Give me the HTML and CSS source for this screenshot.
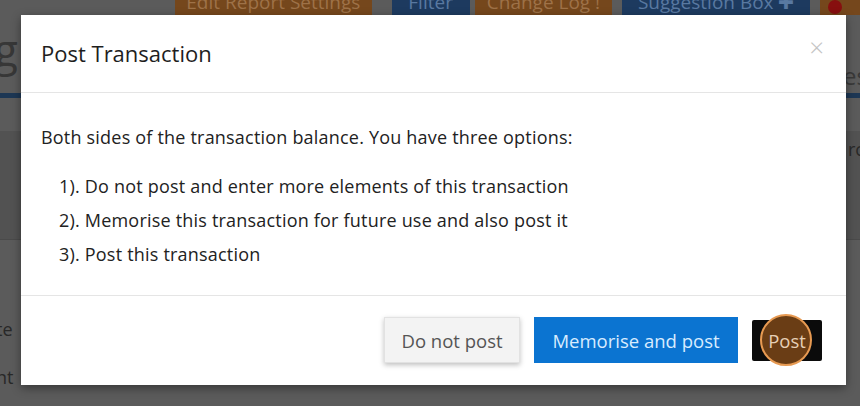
FILE: index.html
```html
<!DOCTYPE html>
<html lang="en">
<head>
  <meta charset="UTF-8">
  <title>Post Transaction</title>
  <link rel="stylesheet" href="styles.css">
</head>
<body>
  <div class="page">
    <div class="toolbar">
      <span class="tool-btn tool-orange tool-report">Edit Report Settings</span>
      <span class="tool-btn tool-blue tool-filter">Filter</span>
      <span class="tool-btn tool-orange tool-log">Change Log !</span>
      <span class="tool-btn tool-blue tool-suggest">Suggestion Box &#10010;</span>
      <span class="tool-btn tool-orange tool-dot"><i class="red-dot"></i></span>
    </div>
    <div class="page-head">
      <span class="page-title">g</span>
      <span class="page-sub">es</span>
    </div>
    <div class="page-rule"></div>
    <div class="page-band"><span class="band-text">rc</span></div>
    <div class="page-rows">
      <div class="row-label">te</div>
      <div class="row-label">nt</div>
    </div>
  </div>

  <div class="overlay"></div>

  <div class="modal">
    <div class="modal-header">
      <h4 class="modal-title">Post Transaction</h4>
      <span class="modal-close">&times;</span>
    </div>
    <div class="modal-body">
      <p class="modal-lead">Both sides of the transaction balance. You have three options:</p>
      <ul class="option-list">
        <li>1). Do not post and enter more elements of this transaction</li>
        <li>2). Memorise this transaction for future use and also post it</li>
        <li>3). Post this transaction</li>
      </ul>
    </div>
    <div class="modal-footer">
      <button class="btn btn-default">Do not post</button>
      <button class="btn btn-primary">Memorise and post</button>
      <button class="btn btn-dark"><span class="click-mark"></span><span class="btn-label">Post</span></button>
    </div>
  </div>
</body>
</html>
```

FILE: styles.css
```css
:root {
  --page-bg: #5f5f5f;
  --dim-orange: #7a4a1e;
  --dim-blue: #1f3d63;
  --modal-text: #222;
  --brand-blue: #0b74d1;
}

body {
  margin: 0;
  width: 860px;
  height: 406px;
  overflow: hidden;
  position: relative;
  background: var(--page-bg);
  font-family: "Open Sans", "Noto Sans", sans-serif;
}

/* dimmed page behind the dialog */
.page {
  height: 100%;
  display: flex;
  flex-direction: column;
}

.toolbar {
  display: flex;
  height: 15px;
  padding-left: 175px;
  gap: 10px;
  overflow: hidden;
}

.tool-btn {
  display: flex;
  align-items: flex-end;
  justify-content: center;
  height: 30px;
  margin-top: -15px;
  color: #a5774b;
  font-size: 19px;
  line-height: 1;
  padding-bottom: 3px;
  box-sizing: border-box;
  white-space: nowrap;
}

.tool-orange { background: var(--dim-orange); }
.tool-blue { background: var(--dim-blue); color: #5d7ea8; }

.tool-report { width: 197px; }
.tool-filter { width: 78px; margin-left: 10px; }
.tool-log { width: 138px; margin-left: -5px; }
.tool-suggest { width: 188px; }
.tool-dot { width: 40px; justify-content: flex-start; padding-left: 8px; }

.red-dot {
  width: 14px;
  height: 14px;
  border-radius: 50%;
  background: #8d1010;
  margin-bottom: -2px;
}

.page-head {
  height: 78px;
  display: flex;
  justify-content: space-between;
  align-items: flex-start;
  color: #3a3a3a;
}

.page-title {
  font-size: 44px;
  line-height: 1;
  margin-top: 12px;
  margin-left: -6px;
}

.page-sub {
  font-size: 24px;
  margin-top: 44px;
  margin-right: -8px;
  color: #3c3c3c;
}

.page-rule {
  height: 5px;
  background: #1f3a58;
}

.page-band {
  margin-top: 33px;
  height: 108px;
  background: #565656;
  border-bottom: 1px solid #4e4e4e;
  display: flex;
  justify-content: flex-end;
}

.band-text {
  font-size: 18px;
  color: #2a2a2a;
  margin-top: 6px;
  margin-right: -4px;
}

.page-rows {
  flex: 1;
  display: flex;
  flex-direction: column;
  padding-top: 80px;
  gap: 30px;
}

.row-label {
  font-size: 18px;
  color: #2a2a2a;
  margin-left: -4px;
  line-height: 1;
}

.overlay {
  position: absolute;
  inset: 0;
  background: rgba(0, 0, 0, 0.04);
}

/* dialog */
.modal {
  position: absolute;
  top: 15px;
  left: 21px;
  width: 825px;
  height: 370px;
  background: #fff;
  box-shadow: 0 3px 9px rgba(0, 0, 0, 0.4);
  display: flex;
  flex-direction: column;
  color: var(--modal-text);
}

.modal-header {
  height: 77px;
  border-bottom: 1px solid #e5e5e5;
  display: flex;
  align-items: flex-start;
  justify-content: space-between;
  padding: 0 20px;
}

.modal-title {
  margin: 23px 0 0;
  font-size: 22px;
  font-weight: 400;
  line-height: 30px;
  color: #1e1e1e;
}

.modal-close {
  margin-top: 17px;
  margin-right: 2px;
  font-size: 26px;
  line-height: 30px;
  color: #c4c4c4;
  font-weight: 300;
}

.modal-body {
  height: 202px;
  border-bottom: 1px solid #e5e5e5;
  padding: 0 20px;
  font-size: 18px;
  letter-spacing: 0.2px;
}

.modal-lead {
  margin: 31px 0 0;
  line-height: 26px;
}

.option-list {
  list-style: none;
  margin: 19px 0 0;
  padding-left: 18px;
  line-height: 34px;
}

.modal-footer {
  flex: 1;
  display: flex;
  justify-content: flex-end;
  align-items: flex-start;
  padding: 21px 24px 0 0;
  gap: 14px;
}

.btn {
  font-family: inherit;
  font-size: 18.5px;
  border: 0;
  border-radius: 0;
  height: 46px;
  padding: 0;
  cursor: pointer;
}

.btn-default {
  background: #f3f3f3;
  color: #555;
  border: 1px solid #e2e2e2;
  box-shadow: 0 2px 5px rgba(0, 0, 0, 0.25);
  width: 136px;
}

.btn-primary {
  background: var(--brand-blue);
  color: #d8ecff;
  width: 204px;
}

.btn-dark {
  position: relative;
  background: #0b0b0b;
  color: #e6cfb6;
  width: 70px;
  height: 41px;
  margin-top: 3px;
  border-radius: 2px;
}

.btn-label {
  position: relative;
}

/* click marker drawn over the Post button */
.click-mark {
  position: absolute;
  left: 8px;
  top: -6px;
  width: 52px;
  height: 52px;
  box-sizing: border-box;
  border-radius: 50%;
  background: #6a3d15;
  border: 2px solid #e79a52;
}
```
